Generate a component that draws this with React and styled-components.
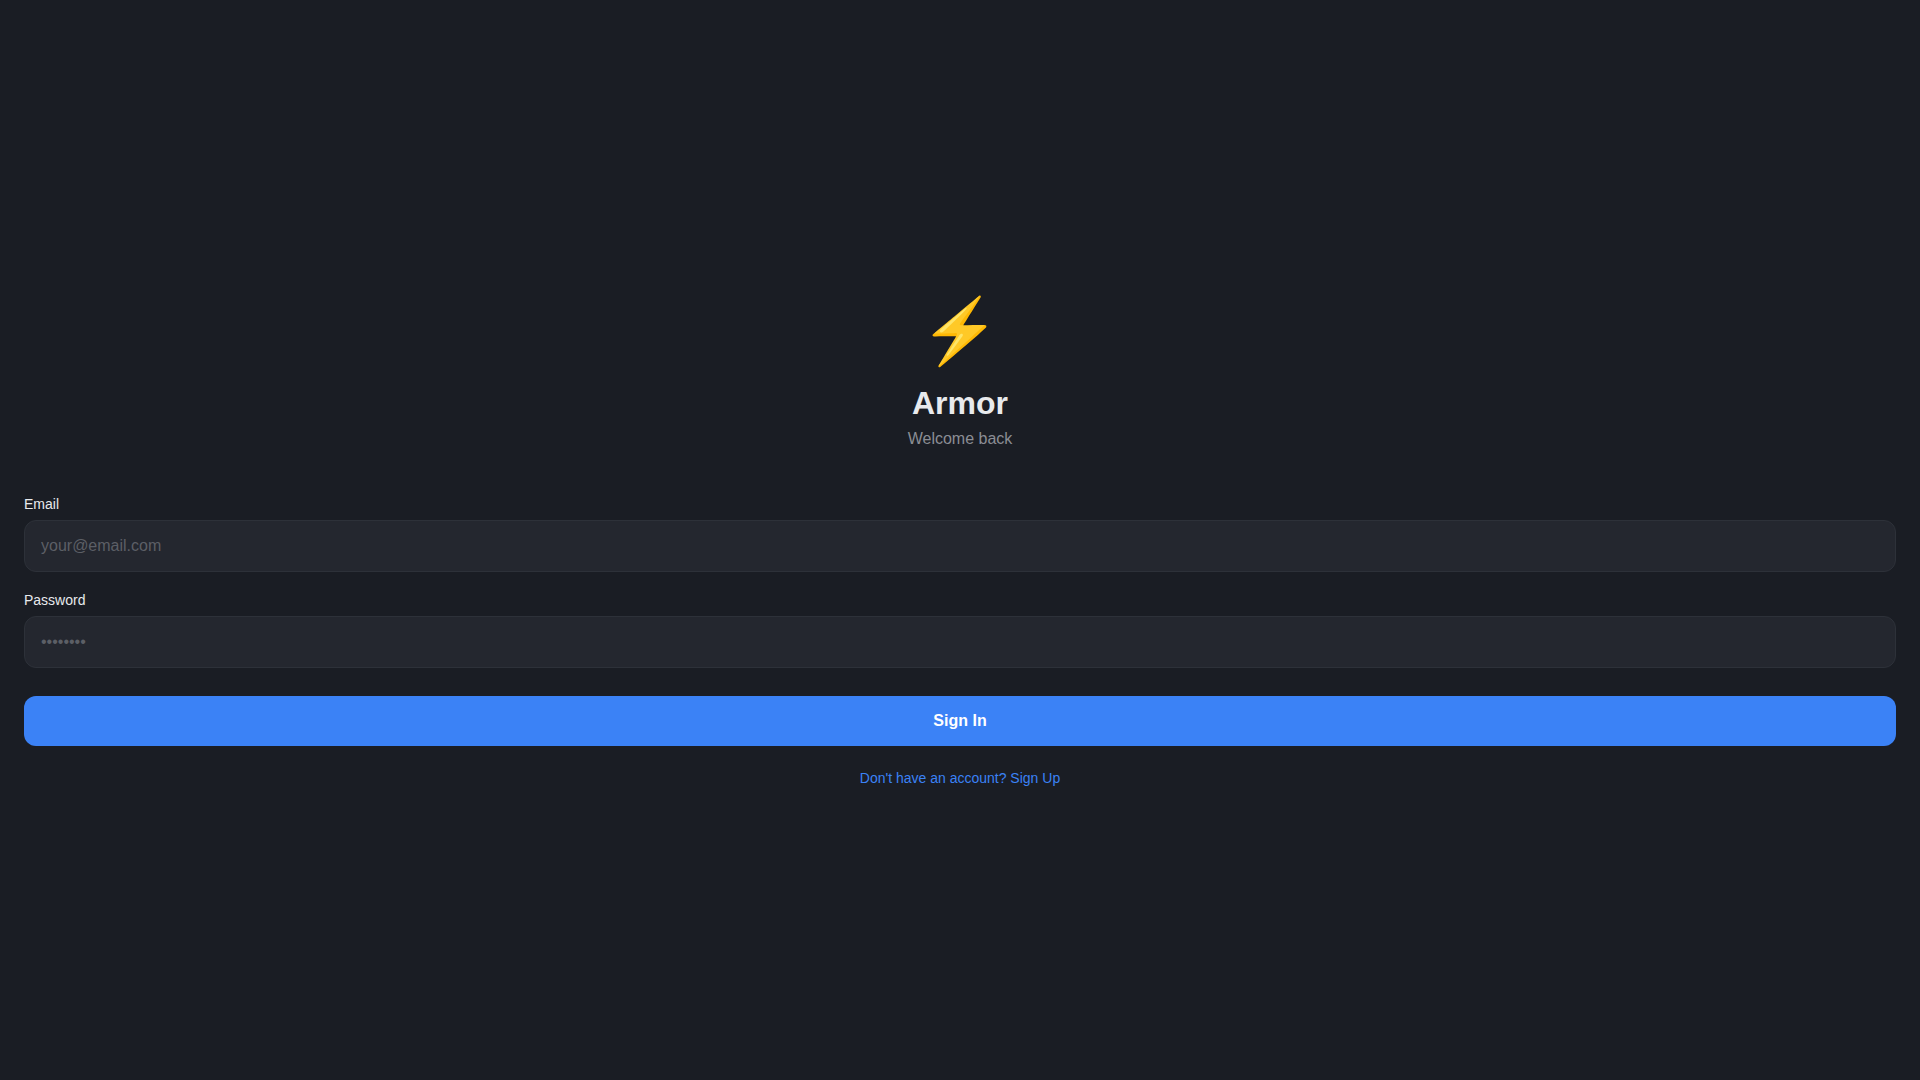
import React from "react";
import styled, { createGlobalStyle } from "styled-components";

const GlobalStyle = createGlobalStyle`
    * {
        box-sizing: border-box;
    }

    body {
        margin: 0;
        background: #1a1d24;
        font-family: "Liberation Sans", Arial, sans-serif;
        text-rendering: optimizeSpeed;
    }
`;

const Page = styled.main`
    min-height: 100vh;
    padding: 24px;
    display: flex;
    flex-direction: column;
    justify-content: center;
`;

const Header = styled.header`
    margin-bottom: 48px;
    display: flex;
    flex-direction: column;
    align-items: center;
`;

const Logo = styled.div`
    margin-bottom: 18px;
    font-size: 64px;
    line-height: 72px;
`;

const Title = styled.h1`
    margin: 0 0 8px;
    color: #e8eaed;
    font-size: 32px;
    line-height: 37px;
`;

const Subtitle = styled.p`
    margin: 0;
    color: #8b8d94;
    font-size: 16px;
    line-height: 18px;
`;

const Form = styled.form`
    display: flex;
    flex-direction: column;
    gap: 20px;
`;

const Field = styled.div`
    display: flex;
    flex-direction: column;
    gap: 8px;
`;

const Label = styled.label`
    color: #e8eaed;
    font-size: 14px;
    line-height: 16px;
`;

const Input = styled.input`
    width: 100%;
    padding: 16px;
    border: 1px solid #2d3139;
    border-radius: 12px;
    background: #24272f;
    color: #e8eaed;
    font-family: inherit;
    font-size: 16px;
    line-height: 18px;
    text-rendering: inherit;

    &::placeholder {
        color: #5c5f66;
    }
`;

const SubmitButton = styled.button`
    margin-top: 8px;
    padding: 16px;
    border: none;
    border-radius: 12px;
    background: #3b82f6;
    color: #ffffff;
    font-family: inherit;
    font-size: 16px;
    font-weight: 600;
    line-height: 18px;
    text-rendering: inherit;
    cursor: pointer;
`;

const SignUpLink = styled.a`
    margin-top: 24px;
    align-self: center;
    color: #3b82f6;
    font-size: 14px;
    line-height: 16px;
    text-decoration: none;
`;

const App = () => {
    return (
        <>
            <GlobalStyle />
            <Page>
                <Header>
                    <Logo>⚡</Logo>
                    <Title>Armor</Title>
                    <Subtitle>Welcome back</Subtitle>
                </Header>
                <Form onSubmit={(e) => e.preventDefault()}>
                    <Field>
                        <Label htmlFor="email">Email</Label>
                        <Input id="email" type="email" placeholder="your@email.com" />
                    </Field>
                    <Field>
                        <Label htmlFor="password">Password</Label>
                        <Input id="password" type="password" placeholder="••••••••" />
                    </Field>
                    <SubmitButton type="submit">Sign In</SubmitButton>
                </Form>
                <SignUpLink href="#signup">Don't have an account? Sign Up</SignUpLink>
            </Page>
        </>
    );
};

export default App;
